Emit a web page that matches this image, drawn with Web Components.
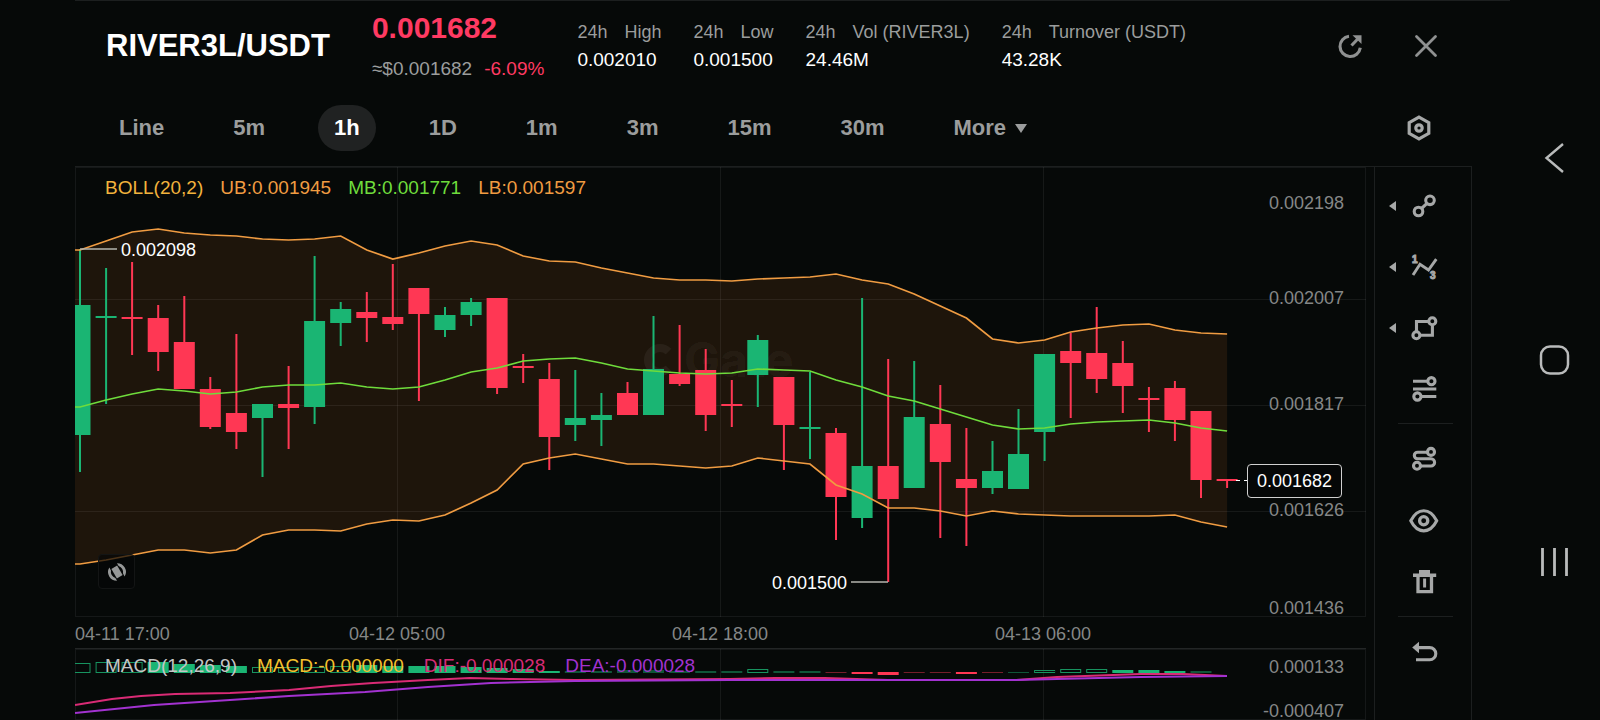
<!DOCTYPE html>
<html lang="en">
<head>
<meta charset="utf-8">
<meta name="viewport" content="width=device-width, initial-scale=1">
<title>RIVER3L/USDT</title>
<style>
  :root {
    --bg: #060908;
    --line: #1c1f1f;
    --muted: #9b9d9d;
    --axis: #858787;
    --icon: #a6a8a8;
    --up: #1ab573;
    --down: #ff3754;
    --price: #ff3a62;
    --boll: #f2b33d;
    --band: #f09c42;
    --mid: #6fdc3c;
    --dif: #d92b75;
    --dea: #a232d0;
  }
  html, body { height: 100%; }
  body {
    margin: 0;
    background: var(--bg);
    color: #fff;
    font-family: "Liberation Sans", Arial, sans-serif;
    overflow: hidden;
  }
</style>
</head>
<body>
<trading-screen>
  <ticker-bar slot="top">
    <ticker-stat><span slot="period">24h</span><span slot="name">High</span>0.002010</ticker-stat>
    <ticker-stat><span slot="period">24h</span><span slot="name">Low</span>0.001500</ticker-stat>
    <ticker-stat><span slot="period">24h</span><span slot="name">Vol (RIVER3L)</span>24.46M</ticker-stat>
    <ticker-stat><span slot="period">24h</span><span slot="name">Turnover (USDT)</span>43.28K</ticker-stat>
  </ticker-bar>
  <interval-tabs slot="top" items="Line,5m,1h,1D,1m,3m,15m,30m" active="1h"></interval-tabs>
  <chart-stack slot="chart">
    <price-chart></price-chart>
    <time-axis></time-axis>
    <macd-chart></macd-chart>
  </chart-stack>
  <drawing-tools slot="tools"></drawing-tools>
  <system-nav slot="nav"></system-nav>
</trading-screen>

<script>
// x positions are in plot units: the plot runs from LEFT to LEFT + WIDTH
const LEFT = 75;
const WIDTH = 1291;
const TOP = 167;
const HEIGHT = 450;
const FIRST = 80;
const STEP = 26.07;
const xAt = (i) => FIRST + i * STEP;
const left = (x) => `${(((x - LEFT) / WIDTH) * 100).toFixed(2)}%`;
const top_ = (y) => `${(((y - TOP) / HEIGHT) * 100).toFixed(2)}%`;
const GRID_X = [397, 720, 1043];

// [direction, body top, body bottom, wick top, wick bottom]
const CANDLES = [
  [1, 305, 435, 249, 472], [1, 316, 318, 268, 404], [0, 317, 319, 262, 355],
  [0, 318, 352, 305, 371], [0, 342, 389, 296, 389], [0, 389, 427, 377, 429],
  [0, 413, 432, 334, 449], [1, 404, 418, 404, 477], [0, 404, 408, 366, 449],
  [1, 321, 407, 256, 424], [1, 309, 323, 302, 346], [0, 312, 318, 292, 342],
  [0, 317, 324, 264, 330], [0, 288, 314, 288, 401], [1, 315, 330, 307, 337],
  [1, 302, 315, 298, 326], [0, 298, 388, 298, 394], [0, 366, 368, 354, 383],
  [0, 379, 437, 363, 470], [1, 418, 425, 370, 441], [1, 415, 420, 393, 446],
  [0, 393, 415, 382, 415], [1, 369, 415, 316, 415], [0, 374, 384, 325, 386],
  [0, 370, 415, 349, 431], [0, 404, 406, 380, 427], [1, 340, 375, 335, 407],
  [0, 377, 425, 377, 470], [1, 427, 429, 372, 459], [0, 433, 497, 428, 540],
  [1, 466, 518, 298, 528], [0, 466, 499, 359, 582], [1, 417, 488, 361, 488],
  [0, 424, 462, 385, 538], [0, 479, 488, 428, 546], [1, 471, 488, 441, 494],
  [1, 454, 489, 409, 489], [1, 354, 432, 354, 461], [0, 351, 363, 333, 418],
  [0, 353, 379, 307, 393], [0, 363, 386, 341, 413], [0, 398, 400, 387, 432],
  [0, 388, 420, 381, 441], [0, 411, 480, 411, 498], [0, 479, 481, 479, 488],
];
const UPPER = [250, 241, 232, 229, 233, 235, 236, 239, 240, 239, 236, 250, 259, 253, 246,
  241, 245, 256, 261, 262, 268, 273, 278, 280, 280, 281, 279, 278, 277, 274, 280, 284,
  294, 306, 318, 339, 343, 340, 332, 328, 325, 324, 330, 333, 334];
const MIDDLE = [407, 400, 394, 389, 391, 394, 392, 387, 385, 385, 383, 387, 389, 387, 380,
  372, 368, 361, 359, 358, 363, 369, 371, 373, 374, 373, 369, 370, 371, 380, 387, 396,
  401, 409, 417, 425, 429, 428, 424, 422, 421, 420, 423, 428, 431];
const LOWER = [564, 560, 555, 550, 550, 553, 550, 535, 530, 530, 531, 524, 520, 521, 515,
  503, 490, 464, 458, 454, 459, 464, 464, 466, 468, 466, 458, 461, 464, 485, 494, 508,
  508, 511, 516, 511, 514, 515, 516, 516, 516, 516, 515, 522, 527];

// [height, style]: h hollow, s solid, d dim; negative heights hang below zero
const BARS = [
  [10, "h"], [11, "h"], [11, "h"], [11, "s"], [9, "s"], [8, "s"], [7, "s"], [6, "h"],
  [6, "h"], [6, "h"], [7, "h"], [8, "s"], [7, "s"], [7, "s"], [7, "s"], [6, "s"],
  [5, "s"], [4, "s"], [2, "s"], [2, "d"], [2, "d"], [3, "d"], [3, "d"], [2, "d"],
  [2, "d"], [2, "d"], [4, "h"], [2, "d"], [2, "d"], [-1, "d"], [-2, "s"], [-3, "s"],
  [-1, "d"], [-1, "d"], [-2, "s"], [-1, "d"], [1, "d"], [3, "h"], [4, "h"], [4, "h"],
  [3, "s"], [3, "s"], [2, "s"], [2, "d"], [0, "d"],
];
const DIF = [[75, 705], [112, 699], [141, 696], [175, 694], [230, 693], [289, 690],
  [331, 686], [373, 683], [428, 680], [470, 678], [512, 679], [575, 680], [730, 679],
  [775, 678], [825, 678], [888, 680], [1015, 680], [1057, 677], [1141, 674], [1183, 674], [1227, 676]];
const DEA = [[75, 713], [154, 705], [230, 700], [289, 696], [365, 692], [428, 687],
  [491, 683], [575, 681], [730, 680], [888, 680], [1015, 680], [1057, 679], [1141, 677], [1227, 676]];

const points = (values) =>
  [[LEFT, values[0]], ...values.map((y, i) => [xAt(i).toFixed(1), y])];
const polyline = (list, cls) =>
  `<polyline class="${cls}" points="${list.map((p) => p.join(",")).join(" ")}"/>`;

const ICONS = {
  share: `<path d="M14 5.2A10.2 10.2 0 1 0 25.3 16.8"/><path d="M16.5 14.5 22.5 8.2"/><path d="M17.5 4.3h9v8.8z" fill="currentColor" stroke="none"/>`,
  close: `<path d="M5.5 5.5 24.5 24.5M24.5 5.5 5.5 24.5" stroke-width="2.8" stroke-linecap="round"/>`,
  settings: `<path d="M15 4.1 24.8 9.6V20.4L15 25.900 5.200 20.400V9.600z" stroke-width="3.200"/><circle cx="15" cy="15" r="3.200" stroke-width="3.200"/>`,
  line: `<circle cx="9.5" cy="20.500" r="4.300"/><circle cx="21" cy="9.300" r="4.300"/><path d="M12.500 17.500 18 12.300"/>`,
  wave: `<path d="M4 23 11 12.200 19.500 18 27.300 7.200" stroke-width="2.900"/><text x="3" y="11">1</text><text x="21" y="27">3</text>`,
  shape: `<path d="M19 8.500H7.500V18M12 22.200H23.400V13"/><circle cx="23.300" cy="8.300" r="3.500"/><circle cx="7.400" cy="22.200" r="3.500"/>`,
  levels: `<path d="M4 7.200H18.500M4 15H27.300M12 22.500H27.300"/><circle cx="22.400" cy="7.200" r="3.600"/><circle cx="8.400" cy="22.500" r="3.600"/>`,
  path: `<circle cx="22" cy="6.900" r="3.500"/><circle cx="8" cy="20.800" r="3.500"/><path d="M18.300 7.200H8.600a3.200 3.200 0 0 0 0 6.600H22a3.400 3.400 0 0 1 0 7.200H12"/>`,
  eye: `<path d="M1.800 14.800C8.500 1.400 21 1.400 27.700 14.800 21 28.200 8.500 28.200 1.800 14.800z"/><circle cx="14.700" cy="14.800" r="4.100" stroke-width="3.300"/>`,
  trash: `<path d="M10 4.800H21M4 8.300H27.200" stroke-width="3.400"/><path d="M9 9V24.700H22.500V9" stroke-width="3.300"/><path d="M15.600 11.500V20.500" stroke-width="3"/>`,
  undo: `<path d="M8 9.600H20.700a6.100 6.100 0 0 1 0 12.200H7"/><path d="M3.200 9.500 10 3.800V15.200z" fill="currentColor" stroke="none"/>`,
  rotate: `<g transform="rotate(-30 15 15)" stroke="none" fill="currentColor"><rect x="10.500" y="7.500" width="9" height="15"/><path d="M9 4.500A12 12 0 0 0 9 25.500V21A9 9 0 0 1 9 9z"/><path d="M21 4.500A12 12 0 0 1 21 25.500V21A9 9 0 0 0 21 9z"/></g>`,
  back: `<path d="M23 1 6.500 15 23 29" stroke-width="2.400"/>`,
  home: `<rect x="1" y="1.500" width="27" height="27" rx="9" stroke-width="2.500"/>`,
  recents: `<path d="M2.500 1V29M14.500 1V29M26.500 1V29" stroke-width="2.800"/>`,
};

class AppIcon extends HTMLElement {
  constructor() {
    super();
    this.attachShadow({ mode: "open" });
  }

  connectedCallback() {
    this.shadowRoot.innerHTML = `
      <style>
        :host { display: block; width: 30px; height: 30px; }
        svg { display: block; width: 100%; height: 100%; overflow: visible; }
        text { font: bold 10px "Liberation Sans", sans-serif; fill: currentColor; stroke-width: 1; }
      </style>
      <svg viewBox="0 0 30 30" fill="none" stroke="currentColor" stroke-width="3.1" aria-hidden="true">${ICONS[this.getAttribute("name")]}</svg>`;
  }
}
customElements.define("app-icon", AppIcon);

class TradingScreen extends HTMLElement {
  constructor() {
    super();
    this.attachShadow({ mode: "open" }).innerHTML = `
      <style>
        :host { display: flex; height: 100vh; }
        main {
          flex: 1;
          min-width: 0;
          display: flex;
          flex-direction: column;
          margin-left: 75px;
          border-top: 1px solid var(--line);
        }
        .top, .work { margin-right: 38px; }
        .top { border-bottom: 1px solid var(--line); }
        .work { flex: 1; min-height: 0; display: flex; gap: 8px; }
      </style>
      <main>
        <div class="top"><slot name="top"></slot></div>
        <div class="work"><slot name="chart"></slot><slot name="tools"></slot></div>
      </main>
      <slot name="nav"></slot>`;
  }
}
customElements.define("trading-screen", TradingScreen);

class TickerBar extends HTMLElement {
  constructor() {
    super();
    this.attachShadow({ mode: "open" }).innerHTML = `
      <style>
        :host {
          display: flex;
          align-items: center;
          height: 90px;
          padding: 0 8px 0 31px;
          white-space: nowrap;
        }
        h1 { margin: 0 42px 0 0; font-size: 31px; line-height: 36px; }
        .last { display: flex; flex-direction: column; gap: 12px; margin-right: 33px; }
        .price { font-size: 30px; line-height: 34px; font-weight: bold; color: var(--price); }
        .sub { display: flex; gap: 12px; font-size: 19px; line-height: 24px; color: var(--muted); }
        .change { color: var(--price); }
        .stats { display: flex; gap: 32px; }
        .actions { display: flex; margin-left: auto; }
        button {
          display: grid;
          place-items: center;
          width: 76px;
          height: 48px;
          padding: 0;
          border: 0;
          background: none;
          color: #8f9191;
        }
      </style>
      <h1>RIVER3L/USDT</h1>
      <div class="last">
        <span class="price">0.001682</span>
        <div class="sub"><span>≈$0.001682</span><span class="change">-6.09%</span></div>
      </div>
      <div class="stats"><slot></slot></div>
      <div class="actions">
        <button type="button" aria-label="Share"><app-icon name="share"></app-icon></button>
        <button type="button" aria-label="Close"><app-icon name="close"></app-icon></button>
      </div>`;
  }
}
customElements.define("ticker-bar", TickerBar);

class TickerStat extends HTMLElement {
  constructor() {
    super();
    this.attachShadow({ mode: "open" }).innerHTML = `
      <style>
        :host { display: flex; flex-direction: column; gap: 4px; font-size: 19px; line-height: 24px; }
        .label { display: flex; gap: 17px; font-size: 18px; color: var(--muted); }
      </style>
      <div class="label"><slot name="period"></slot><slot name="name"></slot></div>
      <div><slot></slot></div>`;
  }
}
customElements.define("ticker-stat", TickerStat);

class IntervalTabs extends HTMLElement {
  constructor() {
    super();
    this.attachShadow({ mode: "open" });
  }

  connectedCallback() {
    const active = this.getAttribute("active");
    const tabs = this.getAttribute("items").split(",").map((name) =>
      `<button type="button" class="tab" aria-pressed="${name === active}">${name}</button>`).join("");
    this.shadowRoot.innerHTML = `
      <style>
        :host {
          display: flex;
          align-items: center;
          gap: 37px;
          padding: 14px 15px 15px 28px;
        }
        button, select {
          height: 46px;
          padding: 0 16px;
          border: 0;
          border-radius: 23px;
          background: none;
          color: var(--muted);
          font: bold 22px/46px "Liberation Sans", Arial, sans-serif;
        }
        button[aria-pressed="true"] { background: #202222; color: #fff; }
        .more { display: flex; align-items: center; }
        select { appearance: none; padding: 0 8px 0 16px; }
        .caret {
          border: 6px solid transparent;
          border-top: 9px solid var(--muted);
          border-bottom: 0;
        }
        .settings {
          display: grid;
          place-items: center;
          width: 76px;
          margin-left: auto;
          color: var(--icon);
        }
      </style>
      ${tabs}
      <div class="more">
        <select aria-label="More intervals"><option>More</option></select>
        <span class="caret"></span>
      </div>
      <button type="button" class="settings" aria-label="Chart settings"><app-icon name="settings"></app-icon></button>`;
    this.shadowRoot.addEventListener("click", (e) => this.#select(e.target.closest(".tab")));
  }

  #select(tab) {
    if (!tab) return;
    this.shadowRoot.querySelectorAll(".tab").forEach((t) => t.setAttribute("aria-pressed", t === tab));
  }
}
customElements.define("interval-tabs", IntervalTabs);

class ChartStack extends HTMLElement {
  constructor() {
    super();
    this.attachShadow({ mode: "open" }).innerHTML = `
      <style>
        :host { flex: 1; min-width: 0; display: grid; grid-template-rows: 1fr 31px 72px; }
      </style>
      <slot></slot>`;
  }
}
customElements.define("chart-stack", ChartStack);

// shared by both plots: svg stretches with the pane, labels lie over it
const PLOT_STYLE = `
  :host {
    display: block;
    position: relative;
    min-height: 0;
    overflow: hidden;
    font-size: 18px;
    line-height: 22px;
    white-space: nowrap;
    box-shadow: inset 0 0 0 1px #151818;
  }
  svg { position: absolute; inset: 0; width: 100%; height: 100%; }
  line, polyline { fill: none; stroke-width: 2; vector-effect: non-scaling-stroke; }
  .grid line { stroke: #fff; stroke-opacity: .065; stroke-width: 1; }
  .tick { position: absolute; right: 22px; transform: translateY(-50%); color: var(--axis); }
  .legend { position: absolute; left: 30px; display: flex; font-size: 19px; }
  .up { fill: var(--up); }
  .down { fill: var(--down); }`;

const gridX = (y1, y2) =>
  GRID_X.map((x) => `<line x1="${x}.5" x2="${x}.5" y1="${y1}" y2="${y2}"/>`).join("");

class PriceChart extends HTMLElement {
  constructor() {
    super();
    const candles = CANDLES.map(([up, top, bottom, high, low], i) => {
      const x = xAt(i);
      return `<g class="${up ? "up" : "down"}"><rect x="${(x - 1).toFixed(1)}" y="${high}" width="2" height="${low - high}"/><rect x="${(x - 10.5).toFixed(1)}" y="${top}" width="21" height="${bottom - top}"/></g>`;
    }).join("");
    const band = [...points(UPPER), ...points(LOWER).reverse()].map((p) => p.join(",")).join(" ");
    const rows = [299, 405, 511].map((y) => `<line x1="75" x2="1366" y1="${y}.5" y2="${y}.5"/>`).join("");
    const ticks = [[203, "0.002198"], [298, "0.002007"], [404, "0.001817"], [510, "0.001626"], [608, "0.001436"]]
      .map(([y, text]) => `<span class="tick" style="top:${top_(y)}">${text}</span>`).join("");

    this.attachShadow({ mode: "open" }).innerHTML = `
      <style>
        ${PLOT_STYLE}
        .band { fill: #1e150b; }
        .ub, .lb, .mb { stroke-width: 1.7; }
        .ub, .lb { stroke: var(--band); }
        .mb { stroke: var(--mid); }
        .mark { stroke: #b4b4ae; stroke-width: 1.5; }
        .last { stroke: #fff; stroke-width: 1; stroke-dasharray: 4 4; }
        .legend { top: 10px; gap: 17px; }
        .watermark {
          position: absolute;
          display: flex;
          align-items: center;
          gap: 8px;
          transform: translateY(-50%);
          font: bold 48px/48px Inter, sans-serif;
          color: rgba(255, 255, 255, .055);
        }
        .watermark i { width: 16px; height: 16px; border: 8px solid; border-right-color: transparent; border-radius: 50%; }
        .value { position: absolute; transform: translateY(-50%); }
        .value.low { transform: translate(-100%, -50%); }
        .tag {
          position: absolute;
          right: 24px;
          transform: translateY(-50%);
          padding: 5px 9px;
          border: 1px solid #d0d0d0;
          border-radius: 4px;
          background: #050707;
        }
        button {
          position: absolute;
          left: 23px;
          bottom: 28px;
          display: grid;
          place-items: center;
          width: 37px;
          height: 35px;
          padding: 0;
          border: 1px solid #131515;
          border-radius: 4px;
          background: rgba(5, 7, 7, .7);
          color: #969898;
        }
        button app-icon { width: 22px; height: 22px; }
      </style>
      <svg viewBox="75 167 1291 450" preserveAspectRatio="none" aria-hidden="true">
        <polygon class="band" points="${band}"/>
        <g class="grid">${rows}${gridX(167, 617)}</g>
      </svg>
      <div class="watermark" style="left:${left(644)};top:${top_(360)}"><i></i>Gate</div>
      <svg viewBox="75 167 1291 450" preserveAspectRatio="none" role="img" aria-label="Price candles with Bollinger bands">
        ${candles}
        ${polyline(points(UPPER), "ub")}
        ${polyline(points(MIDDLE), "mb")}
        ${polyline(points(LOWER), "lb")}
        <line class="mark" x1="80" x2="117" y1="249" y2="249"/>
        <line class="mark" x1="851" x2="888" y1="582" y2="582"/>
        <line class="last" x1="1236" x2="1248" y1="480.5" y2="480.5"/>
      </svg>
      <div class="legend">
        <span style="color:var(--boll)">BOLL(20,2)</span>
        <span style="color:var(--band)">UB:0.001945</span>
        <span style="color:var(--mid)">MB:0.001771</span>
        <span style="color:var(--band)">LB:0.001597</span>
      </div>
      <span class="value" style="left:${left(121)};top:${top_(250)}">0.002098</span>
      <span class="value low" style="left:${left(847)};top:${top_(583)}">0.001500</span>
      ${ticks}
      <span class="tag" style="top:${top_(481)}">0.001682</span>
      <button type="button" aria-label="Rotate screen"><app-icon name="rotate"></app-icon></button>`;
  }
}
customElements.define("price-chart", PriceChart);

class TimeAxis extends HTMLElement {
  constructor() {
    super();
    const labels = ["04-12 05:00", "04-12 18:00", "04-13 06:00"]
      .map((text, i) => `<span class="mid" style="left:${left(GRID_X[i])}">${text}</span>`).join("");
    this.attachShadow({ mode: "open" }).innerHTML = `
      <style>
        :host {
          display: block;
          position: relative;
          font-size: 18px;
          line-height: 34px;
          color: var(--axis);
          white-space: nowrap;
        }
        .mid { position: absolute; top: 0; transform: translateX(-50%); }
      </style>
      <span>04-11 17:00</span>${labels}`;
  }
}
customElements.define("time-axis", TimeAxis);

class MacdChart extends HTMLElement {
  constructor() {
    super();
    const zero = 673;
    const bars = BARS.map(([h, style], i) => {
      const y = h < 0 ? zero - 1 : zero - h;
      const inset = style === "h" ? 0.5 : 0;
      return `<rect class="${h < 0 ? "down" : "up"} ${style}" x="${(xAt(i) - 10.5 + inset).toFixed(1)}" y="${y + inset}" width="${21 - inset * 2}" height="${Math.abs(h) - (h ? inset * 2 : 0)}"/>`;
    }).join("");
    this.attachShadow({ mode: "open" }).innerHTML = `
      <style>
        ${PLOT_STYLE}
        :host { border-top: 1px solid #232626; }
        .h { fill: none; stroke: #17935f; stroke-width: 1; }
        .d { opacity: .45; }
        .dif { stroke: var(--dif); }
        .dea { stroke: var(--dea); }
        .legend { top: 6px; gap: 20px; }
      </style>
      <svg viewBox="75 649 1291 71" preserveAspectRatio="none" role="img" aria-label="MACD">
        <g class="grid">${gridX(649, 720)}</g>
        ${bars}
        ${polyline(DIF, "dif")}
        ${polyline(DEA, "dea")}
      </svg>
      <div class="legend">
        <span style="color:#c4c6c6">MACD(12,26,9)</span>
        <span style="color:#f5c12e">MACD:-0.000000</span>
        <span style="color:var(--dif)">DIF:-0.000028</span>
        <span style="color:var(--dea)">DEA:-0.000028</span>
      </div>
      <span class="tick" style="top:25%">0.000133</span>
      <span class="tick" style="top:87%">-0.000407</span>`;
  }
}
customElements.define("macd-chart", MacdChart);

class ToolButton extends HTMLElement {
  constructor() {
    super();
    this.attachShadow({ mode: "open" });
  }

  connectedCallback() {
    this.shadowRoot.innerHTML = `
      <style>
        :host { display: block; }
        button {
          display: grid;
          grid-template-columns: 7px 30px;
          gap: 13px;
          align-items: center;
          width: 100%;
          height: 61px;
          padding: 0 0 0 14px;
          border: 0;
          background: none;
          color: var(--icon);
        }
        .arrow { border: 5px solid transparent; border-right: 7px solid currentColor; border-left: 0; visibility: hidden; }
        :host([menu]) .arrow { visibility: visible; }
      </style>
      <button type="button" aria-label="${this.getAttribute("label")}">
        <span class="arrow"></span>
        <app-icon name="${this.getAttribute("icon")}"></app-icon>
      </button>`;
  }
}
customElements.define("tool-button", ToolButton);

class DrawingTools extends HTMLElement {
  constructor() {
    super();
    this.attachShadow({ mode: "open" }).innerHTML = `
      <style>
        :host {
          display: block;
          box-sizing: border-box;
          width: 98px;
          padding-top: 8px;
          border: 1px solid var(--line);
          border-width: 0 1px;
          overflow: hidden;
        }
        hr { height: 1px; margin: 4px 18px 5px 23px; border: 0; background: #1c1f1f; }
      </style>
      <tool-button menu icon="line" label="Trend lines"></tool-button>
      <tool-button menu icon="wave" label="Waves"></tool-button>
      <tool-button menu icon="shape" label="Shapes"></tool-button>
      <tool-button icon="levels" label="Fibonacci levels"></tool-button>
      <hr>
      <tool-button icon="path" label="Continuous drawing"></tool-button>
      <tool-button icon="eye" label="Show drawings"></tool-button>
      <tool-button icon="trash" label="Delete drawings"></tool-button>
      <hr>
      <tool-button icon="undo" label="Undo"></tool-button>`;
  }
}
customElements.define("drawing-tools", DrawingTools);

class SystemNav extends HTMLElement {
  constructor() {
    super();
    this.attachShadow({ mode: "open" }).innerHTML = `
      <style>
        :host { display: flex; flex-direction: column; justify-content: center; width: 90px; }
        button {
          display: grid;
          place-items: center;
          height: 202px;
          padding: 0;
          border: 0;
          background: none;
          color: #b9bbbb;
        }
      </style>
      <button type="button" aria-label="Back"><app-icon name="back"></app-icon></button>
      <button type="button" aria-label="Home"><app-icon name="home"></app-icon></button>
      <button type="button" aria-label="Recent apps"><app-icon name="recents"></app-icon></button>`;
  }
}
customElements.define("system-nav", SystemNav);
</script>
</body>
</html>
